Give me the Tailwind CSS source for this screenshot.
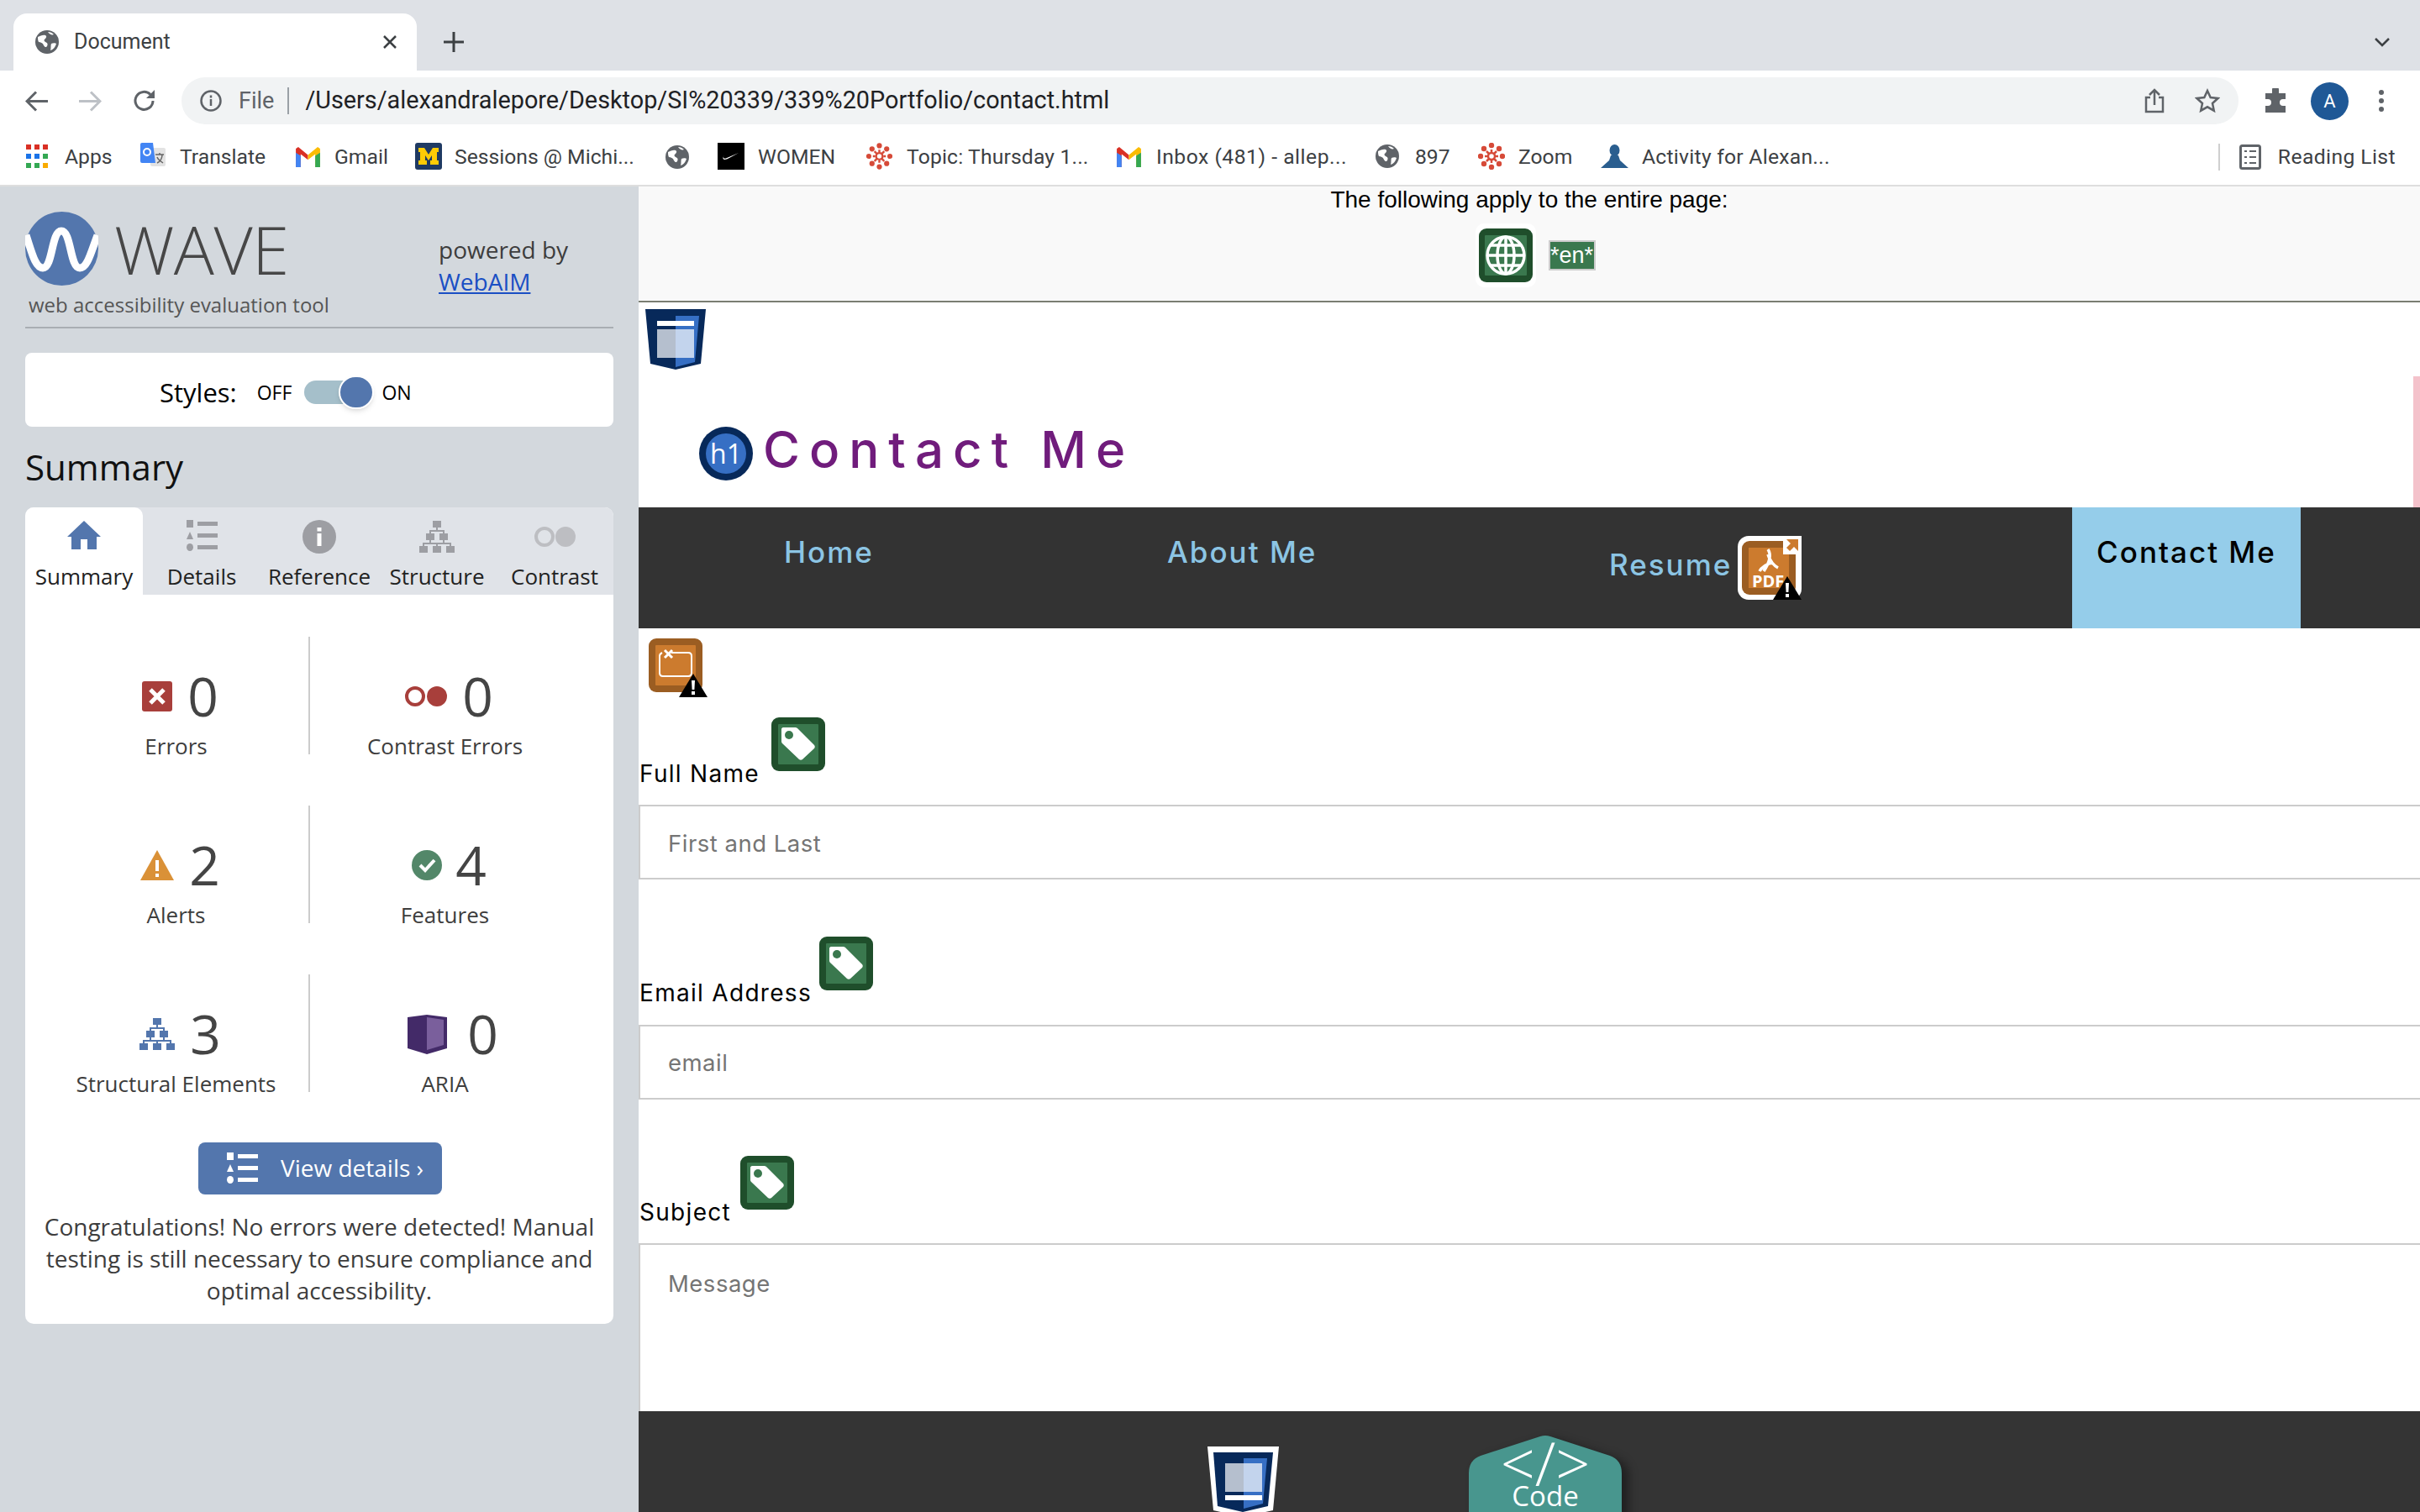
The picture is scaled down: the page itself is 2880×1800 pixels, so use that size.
<!DOCTYPE html>
<html>

<head>
    <meta charset="UTF-8">
    <meta name="viewport" content="width=device-width, initial-scale=1.0">
    <title>Document</title>
    <script src="https://cdn.jsdelivr.net/npm/@tailwindcss/browser@4"></script>
</head>

<body class="w-[2880px] h-[1800px] overflow-hidden bg-white font-['Roboto',sans-serif]">
    <!-- shared icons -->
    <svg class="hidden">
        <symbol id="chromeGlobe" viewBox="0 0 28 28">
            <circle cx="14" cy="14" r="14" fill="#5f6368" />
            <path d="M3 8c3-1 6-3 9-2 2 1 1 3 0 4-2 1-2 3 0 4 3 1 3 3 2 5-1 2-3 1-4-1-1-3-4-4-6-4-1-2-1-4-1-6z" fill="#fff" />
            <path d="M19 16c2-1 5-1 6 0-1 4-4 7-7 8 1-3 0-6 1-8z" fill="#fff" />
            <path d="M15 2c3 0 5 1 7 3-2 1-5 0-7-3z" fill="#fff" />
        </symbol>
        <symbol id="gmail" viewBox="0 0 30 26">
            <path d="M0 26V3l3-2 12 10v6L6 10v16z" fill="#d93025" />
            <path d="M30 26V3l-3-2-12 10v6l9-7v16z" fill="#fbbc04" />
            <path d="M0 26V8l6 4v14z" fill="#4285f4" />
            <path d="M30 26V8l-6 4v14z" fill="#34a853" />
        </symbol>
        <symbol id="canvasLogo" viewBox="0 0 32 32" fill="#d64a38">
            <circle cx="16" cy="16" r="4" fill="none" stroke="#d64a38" stroke-width="2.500" />
            <circle cx="16" cy="3" r="3.200" />
            <circle cx="16" cy="29" r="3.200" />
            <circle cx="3" cy="16" r="3.200" />
            <circle cx="29" cy="16" r="3.200" />
            <circle cx="7" cy="7" r="3.200" />
            <circle cx="25" cy="7" r="3.200" />
            <circle cx="7" cy="25" r="3.200" />
            <circle cx="25" cy="25" r="3.200" />
            <path d="M16 8v3M16 21v3M8 16h3M21 16h3M10 10l3 3M22 10l-3 3M10 22l3-3M22 22l-3-3" stroke="#d64a38" stroke-width="2.500" />
        </symbol>
        <symbol id="tagIcon" viewBox="0 0 64 64">
            <rect width="64" height="64" rx="9" fill="#1f4e2b" />
            <rect x="8" y="8" width="48" height="48" rx="1" fill="#3a784e" />
            <path d="M14 12h14c1 0 2 0 3 1l20 20c1 1 1 3 0 4L37 50c-1 1-3 1-4 0L13 31c-1-1-1-2-1-3V14c0-1 1-2 2-2z" fill="#fff" />
            <circle cx="21" cy="21" r="5" fill="#3a784e" />
        </symbol>
        <symbol id="warnBadge" viewBox="0 0 34 28">
            <path d="M17 0l17 28H0z" fill="#000" />
            <path d="M15 8h4l-.6 11h-2.800zM15 21h4v4h-4z" fill="#fff" />
        </symbol>
        <symbol id="detailsList" viewBox="0 0 37 37">
            <rect width="8" height="9" />
            <path d="M4 14l4 9H0z" />
            <ellipse cx="4" cy="32.500" rx="4" ry="4.500" />
            <rect x="13" y="2" width="24" height="5" />
            <rect x="13" y="16" width="24" height="5" />
            <rect x="13" y="30" width="24" height="5" />
        </symbol>
        <symbol id="structureTree" viewBox="0 0 42 38">
            <rect x="16" y="0" width="10" height="8" />
            <rect x="8" y="15" width="10" height="8" />
            <rect x="24" y="15" width="10" height="8" />
            <rect x="0" y="30" width="10" height="8" />
            <rect x="16" y="30" width="10" height="8" />
            <rect x="32" y="30" width="10" height="8" />
            <path d="M21 8v4M13 15v-3h16v3M13 23v4M29 23v4M5 30v-3h32v3M21 27v3" fill="none" stroke="currentColor" stroke-width="2" />
        </symbol>
    </svg>

    <div class="flex flex-col h-full">
        <!-- tab strip -->
        <div class="h-[84px] shrink-0 bg-[#dee1e6] flex items-end pl-[16px] pr-[35px]">
            <div class="w-[480px] h-[68px] bg-white rounded-t-[16px] flex items-center pl-[26px] pr-[23px]">
                <svg class="w-[28px] h-[28px]"><use href="#chromeGlobe" /></svg>
                <span class="ml-[18px] text-[25px] text-[#3c4043]">Document</span>
                <svg class="ml-auto w-[18px] h-[18px]" viewBox="0 0 18 18" stroke="#3c4043" stroke-width="2.500"><path d="M2 2l14 14M16 2L2 16" /></svg>
            </div>
            <svg class="ml-[32px] mb-[22px] w-[24px] h-[24px]" viewBox="0 0 24 24" stroke="#3c4043" stroke-width="3"><path d="M12 0v24M0 12h24" /></svg>
            <svg class="ml-auto mb-[28px] w-[20px] h-[12px]" viewBox="0 0 20 12" fill="none" stroke="#3c4043" stroke-width="2.500"><path d="M2 2l8 8 8-8" /></svg>
        </div>

        <!-- toolbar -->
        <div class="h-[64px] shrink-0 bg-white flex items-center pt-[8px] pl-[30px] pr-[32px]">
            <svg class="w-[27px] h-[25px]" viewBox="0 0 27 25" fill="none" stroke="#5f6368" stroke-width="3"><path d="M27 12.500H3M13 1.500l-11 11 11 11" /></svg>
            <svg class="ml-[37px] w-[27px] h-[25px]" viewBox="0 0 27 25" fill="none" stroke="#bdc1c6" stroke-width="3"><path d="M0 12.500h24M14 1.500l11 11-11 11" /></svg>
            <svg class="ml-[37px] w-[28px] h-[28px]" viewBox="0 0 28 28" fill="none" stroke="#5f6368" stroke-width="3"><path d="M24 14a10.500 10.500 0 1 1-3-7.500" /><path d="M26 1v10H16z" fill="#5f6368" stroke="none" /></svg>
            <div class="ml-[30px] w-[2448px] h-[56px] bg-[#f1f3f4] rounded-full flex items-center pl-[22px] pr-[20px]">
                <svg class="w-[26px] h-[26px]" viewBox="0 0 26 26" fill="none" stroke="#5f6368" stroke-width="2.500"><circle cx="13" cy="13" r="11.500" /><path d="M13 11v8M13 6.500v3" /></svg>
                <span class="ml-[20px] text-[27px] text-[#5f6368]">File</span>
                <span class="ml-[16px] w-[2px] h-[32px] bg-[#9aa0a6]"></span>
                <span class="ml-[19px] text-[28.800px] text-[#202124] whitespace-nowrap">/Users/alexandralepore/Desktop/SI%20339/339%20Portfolio/contact.html</span>
                <svg class="ml-auto w-[24px] h-[30px]" viewBox="0 0 24 30" fill="none" stroke="#5f6368" stroke-width="2.500"><path d="M7 11H2v17h20V11h-5M12 20V2M6 8l6-6 6 6" /></svg>
                <svg class="ml-[36px] mr-[2px] w-[30px] h-[30px]" viewBox="0 0 30 30" fill="none" stroke="#5f6368" stroke-width="2.500"><path d="M15 3l3.700 8 8.800 1-6.500 6 1.800 8.700L15 22.300l-7.800 4.400L9 18l-6.500-6 8.800-1z" /></svg>
            </div>
            <svg class="ml-[30px] w-[28px] h-[30px]" viewBox="0 0 28 30" fill="#5f6368"><path d="M10 2a4 4 0 0 1 8 0v4h8v7h-3a4 4 0 0 0 0 8h3v8H2v-8h3a4 4 0 0 0 0-8H2V6h8z" /></svg>
            <div class="ml-[28px] w-[45px] h-[45px] rounded-full bg-[#1f5896] text-white text-[22px] flex items-center justify-center">A</div>
            <svg class="ml-[35px] w-[8px] h-[28px]" viewBox="0 0 8 28" fill="#5f6368"><circle cx="4" cy="4" r="3" /><circle cx="4" cy="14" r="3" /><circle cx="4" cy="24" r="3" /></svg>
        </div>

        <!-- bookmarks bar -->
        <div class="h-[74px] shrink-0 bg-white border-b-2 border-[#dedede] flex items-center pt-[5px] pl-[31px] pr-[29px] text-[24.700px] text-[#3c4043] whitespace-nowrap">
            <div class="w-[136px] flex items-center gap-[20px]">
                <svg class="w-[26px] h-[28px]" viewBox="0 0 26 28"><path fill="#d93025" d="M0 0h6v6H0zM10 0h6v6h-6zM20 0h6v6h-6z" /><path fill="#1a73e8" d="M0 11h6v6H0zM10 11h6v6h-6z" /><path fill="#34a853" d="M20 11h6v6h-6zM0 22h6v6H0zM10 22h6v6h-6z" /><path fill="#f9ab00" d="M20 22h6v6h-6z" /></svg>
                <span>Apps</span>
            </div>
            <div class="w-[185px] flex items-center gap-[17px]">
                <svg class="w-[30px] h-[32px]" viewBox="0 0 30 32"><rect x="12" y="6" width="18" height="22" rx="2" fill="#e3e3e3" /><path d="M2 0h13l3 24H9l3 8-3-8H2a2 2 0 0 1-2-2V2a2 2 0 0 1 2-2z" fill="#4285f4" /><circle cx="8" cy="11" r="4" fill="none" stroke="#fff" stroke-width="2" /><path d="M18 14h10M23 12v2M20 24c4-2 6-5 6-10M20 17c1 3 4 5 7 7" fill="none" stroke="#666" stroke-width="1.500" /></svg>
                <span>Translate</span>
            </div>
            <div class="w-[142px] flex items-center gap-[17px]">
                <svg class="w-[29px] h-[25px]"><use href="#gmail" /></svg>
                <span>Gmail</span>
            </div>
            <div class="w-[298px] flex items-center gap-[15px]">
                <svg class="w-[32px] h-[32px]" viewBox="0 0 32 32"><rect width="32" height="32" rx="3" fill="#1f3a63" /><path d="M4 6h7l5 8 5-8h7v5h-2v10h2v5H18v-5h2v-6l-4 6-4-6v6h2v5H4v-5h2V11H4z" fill="#ffcb05" /></svg>
                <span>Sessions @ Michi...</span>
            </div>
            <div class="w-[62px] flex items-center">
                <svg class="w-[28px] h-[28px]"><use href="#chromeGlobe" /></svg>
            </div>
            <div class="w-[177px] flex items-center gap-[16px]">
                <svg class="w-[32px] h-[32px]" viewBox="0 0 32 32"><rect width="32" height="32" fill="#000" /><path d="M25 12L11 18c-2 1-4 1-4-1 0-1 1-2 2-3-2 2-4 5-1 6 2 0 4-1 6-2z" fill="#fff" /></svg>
                <span>WOMEN</span>
            </div>
            <div class="w-[298px] flex items-center gap-[17px]">
                <svg class="w-[31px] h-[32px]"><use href="#canvasLogo" /></svg>
                <span class="tracking-[0.150px]">Topic: Thursday 1...</span>
            </div>
            <div class="w-[308px] flex items-center gap-[18px]">
                <svg class="w-[29px] h-[25px]"><use href="#gmail" /></svg>
                <span class="tracking-[0.500px]">Inbox (481) - allep...</span>
            </div>
            <div class="w-[122px] flex items-center gap-[19px]">
                <svg class="w-[28px] h-[28px]"><use href="#chromeGlobe" /></svg>
                <span>897</span>
            </div>
            <div class="w-[146px] flex items-center gap-[16px]">
                <svg class="w-[32px] h-[32px]"><use href="#canvasLogo" /></svg>
                <span>Zoom</span>
            </div>
            <div class="flex items-center gap-[16px]">
                <svg class="w-[33px] h-[28px]" viewBox="0 0 33 28" fill="#2a5e8f"><ellipse cx="16.500" cy="7" rx="6" ry="7" /><path d="M12 13h9l2 6 10 9H0l10-9z" /></svg>
                <span class="tracking-[0.250px]">Activity for Alexan...</span>
            </div>
            <span class="ml-auto w-[2px] h-[32px] bg-[#cfcfcf]"></span>
            <svg class="ml-[23px] w-[26px] h-[30px]" viewBox="0 0 26 30" fill="none" stroke="#5f6368" stroke-width="3"><rect x="1.500" y="1.500" width="23" height="27" rx="2" /><path d="M6 8h3M12 8h8M6 15h3M12 15h8M6 22h3M12 22h8" stroke-width="2" /></svg>
            <span class="ml-[20px] tracking-[0.400px]">Reading List</span>
        </div>

        <div class="flex flex-1 min-h-0">
            <!-- WAVE sidebar -->
            <aside class="w-[760px] shrink-0 bg-[#d3d8dd] px-[30px] pt-[30px] font-['Open_Sans',sans-serif] text-[#3d3d3d]">
                <div class="h-[139px] border-b-2 border-[#a9aeb3] flex justify-between">
                    <div class="w-[400px]">
                        <div class="flex items-center h-[88px]">
                            <svg class="w-[87px] h-[88px]" viewBox="0 0 87 88">
                                <ellipse cx="43.500" cy="44" rx="43.500" ry="44" fill="#5376ad" />
                                <path d="M1 28c7 21 11 39 20 39 12 0 10-44 22-44s10 44 22 44c9 0 13-18 21-39" fill="none" stroke="#fff" stroke-width="9" />
                            </svg>
                            <span class="ml-[19px] text-[80px] leading-[88px] font-light text-[#474747] tracking-[-0.500px]">WAVE</span>
                        </div>
                        <div class="ml-[4px] mt-[6px] text-[24px] leading-[34px] text-[#555] whitespace-nowrap">web accessibility evaluation tool</div>
                    </div>
                    <div class="w-[208px] pt-[26px] text-[28px] leading-[38px]">
                        <div>powered by</div>
                        <a class="text-[#1a4fc4] underline" href="#">WebAIM</a>
                    </div>
                </div>

                <div class="mt-[29px] h-[88px] bg-white rounded-[8px] flex items-center text-black pl-[160px] pt-[6px]">
                    <span class="text-[31px]">Styles:</span>
                    <span class="ml-[24px] text-[23px]">OFF</span>
                    <span class="ml-[15px] relative w-[83px] h-[28px] flex items-center">
                        <span class="w-[60px] h-[28px] bg-[#a5bfca] rounded-l-full"></span>
                        <span class="absolute left-[41px] top-[-6px] w-[42px] h-[40px] rounded-full bg-[#5376ad] border-2 border-white shadow-md"></span>
                    </span>
                    <span class="ml-[9px] text-[23px]">ON</span>
                </div>

                <h2 class="mt-[18px] text-[42px] leading-[60px] text-[#111]">Summary</h2>

                <div class="mt-[18px] h-[972px] bg-white rounded-[10px] overflow-hidden">
                    <div class="h-[104px] bg-[#e0e3e8] flex text-[26px] text-[#222]">
                        <div class="w-[140px] bg-white rounded-tr-[10px] pt-[16px] flex flex-col items-center">
                            <svg class="w-[40px] h-[34px]" viewBox="0 0 40 34" fill="#5376ad"><path d="M20 0l20 19h-5v15H24V22h-8v12H5V19H0z" /></svg>
                            <span class="mt-[14px] leading-[36px]">Summary</span>
                        </div>
                        <div class="w-[140px] pt-[15px] flex flex-col items-center text-[#222]">
                            <svg class="w-[37px] h-[37px] fill-[#9d9ea3]"><use href="#detailsList" /></svg>
                            <span class="mt-[12px] leading-[36px]">Details</span>
                        </div>
                        <div class="w-[140px] pt-[15px] flex flex-col items-center">
                            <svg class="w-[40px] h-[40px]" viewBox="0 0 40 40"><circle cx="20" cy="20" r="20" fill="#9d9ea3" /><path d="M17.500 16h5v15h-5zM17.500 9h5v4.500h-5z" fill="#fff" /></svg>
                            <span class="mt-[9px] leading-[36px] whitespace-nowrap">Reference</span>
                        </div>
                        <div class="w-[140px] pt-[16px] flex flex-col items-center">
                            <svg class="w-[42px] h-[38px] fill-[#9d9ea3] text-[#9d9ea3]"><use href="#structureTree" /></svg>
                            <span class="mt-[10px] leading-[36px] whitespace-nowrap">Structure</span>
                        </div>
                        <div class="w-[140px] pt-[23px] flex flex-col items-center">
                            <svg class="w-[50px] h-[24px]" viewBox="0 0 50 24"><ellipse cx="13" cy="12" rx="10" ry="10" fill="none" stroke="#bdbec2" stroke-width="4" /><ellipse cx="38" cy="12" rx="12" ry="12" fill="#bdbec2" /></svg>
                            <span class="mt-[17px] leading-[36px]">Contrast</span>
                        </div>
                    </div>

                    <div class="mt-[50px] ml-[22px] grid grid-cols-[317px_321px] gap-y-[61px] text-center">
                        <div class="h-[140px] border-r-2 border-[#ccc] pt-[39px]">
                            <div class="flex items-center justify-center gap-[18px] h-[64px] pl-[10px] text-[64px] text-[#444]">
                                <svg class="w-[36px] h-[36px]" viewBox="0 0 36 36"><rect width="36" height="36" rx="3" fill="#a83f3b" /><path d="M10 10l16 16M26 10L10 26" stroke="#fff" stroke-width="5" /></svg>
                                <span>0</span>
                            </div>
                            <div class="mt-[9px] text-[26px] leading-[36px] whitespace-nowrap">Errors</div>
                        </div>
                        <div class="h-[140px] pt-[39px]">
                            <div class="flex items-center justify-center gap-[18px] h-[64px] pl-[10px] text-[64px] text-[#444]">
                                <svg class="w-[50px] h-[24px]" viewBox="0 0 50 24"><circle cx="12" cy="12" r="10" fill="none" stroke="#a83f3b" stroke-width="4" /><circle cx="38" cy="12" r="12" fill="#a83f3b" /></svg>
                                <span>0</span>
                            </div>
                            <div class="mt-[9px] text-[26px] leading-[36px] whitespace-nowrap">Contrast Errors</div>
                        </div>
                        <div class="h-[140px] border-r-2 border-[#ccc] pt-[39px]">
                            <div class="flex items-center justify-center gap-[18px] h-[64px] pl-[10px] text-[64px] text-[#444]">
                                <svg class="w-[40px] h-[36px]" viewBox="0 0 40 36"><path d="M20 0l20 36H0z" fill="#da9137" /><path d="M18 12h4v13h-4zM18 28h4v4h-4z" fill="#fff" /></svg>
                                <span>2</span>
                            </div>
                            <div class="mt-[9px] text-[26px] leading-[36px] whitespace-nowrap">Alerts</div>
                        </div>
                        <div class="h-[140px] pt-[39px]">
                            <div class="flex items-center justify-center gap-[16px] h-[64px] pl-[10px] text-[64px] text-[#444]">
                                <svg class="w-[36px] h-[36px]" viewBox="0 0 36 36"><circle cx="18" cy="18" r="18" fill="#538769" /><path d="M10 18l6 6 11-12" fill="none" stroke="#fff" stroke-width="4" /></svg>
                                <span>4</span>
                            </div>
                            <div class="mt-[9px] text-[26px] leading-[36px] whitespace-nowrap">Features</div>
                        </div>
                        <div class="h-[140px] border-r-2 border-[#ccc] pt-[39px]">
                            <div class="flex items-center justify-center gap-[18px] h-[64px] pl-[10px] text-[64px] text-[#444]">
                                <svg class="w-[42px] h-[38px] fill-[#5376ad] text-[#5376ad]"><use href="#structureTree" /></svg>
                                <span>3</span>
                            </div>
                            <div class="mt-[9px] text-[26px] leading-[36px] whitespace-nowrap">Structural Elements</div>
                        </div>
                        <div class="h-[140px] pt-[39px]">
                            <div class="flex items-center justify-center gap-[24px] h-[64px] pl-[19px] text-[64px] text-[#444]">
                                <svg class="w-[47px] h-[47px]" viewBox="0 0 47 47"><path d="M0 3l23-3 24 3v37l-24 7-23-7z" fill="#432a68" /><path d="M23 3l20 3v30l-20 6z" fill="#7a5f9c" /></svg>
                                <span>0</span>
                            </div>
                            <div class="mt-[9px] text-[26px] leading-[36px] whitespace-nowrap">ARIA</div>
                        </div>
                    </div>

                    <button class="mt-[60px] ml-[206px] w-[290px] h-[62px] rounded-[8px] bg-[#5376ad] text-white flex items-center pl-[34px] pb-[2px] text-[28px]">
                        <svg class="w-[37px] h-[37px] fill-white"><use href="#detailsList" /></svg>
                        <span class="ml-[27px] whitespace-nowrap">View details ›</span>
                    </button>

                    <p class="mt-[19px] px-[20px] text-center text-[28px] leading-[38px]">Congratulations! No errors were detected! Manual testing is still necessary to ensure compliance and optimal accessibility.</p>
                </div>
            </aside>

            <!-- page with WAVE icons -->
            <main class="relative flex-1 min-w-0 flex flex-col overflow-hidden font-['Inter',sans-serif]">
                <div class="h-[138px] shrink-0 bg-[#f9f9f9] border-b-2 border-[#7a7e72] flex flex-col items-center font-['Liberation_Sans',sans-serif] text-black">
                    <div class="text-[28px] leading-[32px] whitespace-nowrap">The following apply to the entire page:</div>
                    <div class="mt-[12px] ml-[14px] flex items-center">
                        <div class="w-[72px] h-[76px] bg-white rounded-[10px] flex items-center justify-center">
                            <svg class="w-[64px] h-[64px]" viewBox="0 0 64 64">
                                <rect width="64" height="64" rx="9" fill="#1f4e2b" />
                                <rect x="7" y="8" width="50" height="48" rx="1" fill="#3a784e" />
                                <g fill="none" stroke="#fff" stroke-width="3.500"><circle cx="32" cy="32" r="22" /><ellipse cx="32" cy="32" rx="10" ry="22" /><path d="M32 10v44M10 32h44M14 20h36M14 44h36" /></g>
                            </svg>
                        </div>
                        <div class="ml-[15px] w-[56px] h-[36px] border-2 border-[#ccc] bg-[#3a784e] text-white text-[27px] leading-[32px] text-center">*en*</div>
                    </div>
                </div>

                <div class="h-[244px] shrink-0 pl-[8px] pt-[8px]">
                    <svg class="w-[72px] h-[72px]" viewBox="0 0 72 72">
                        <path d="M0 0h72l-6 65-30 7-30-7z" fill="#07295a" />
                        <path d="M36 8h28l-5 55-23 6z" fill="#366fc4" />
                        <rect x="14" y="14" width="44" height="6" fill="#fff" />
                        <rect x="14" y="24" width="44" height="34" fill="#fff" fill-opacity=".7" />
                    </svg>
                    <div class="mt-[68px] ml-[64px] flex items-center h-[64px]">
                        <div class="w-[64px] h-[64px] rounded-full bg-[#07295a] flex items-center justify-center">
                            <div class="w-[48px] h-[48px] rounded-full bg-[#366fc4] text-white text-[32px] font-['Open_Sans',sans-serif] flex items-center justify-center">h1</div>
                        </div>
                        <h1 class="ml-[12px] mb-[10px] text-[60px] leading-[56px] font-medium tracking-[11px] text-[#701c7c] whitespace-nowrap">Contact Me</h1>
                    </div>
                </div>
                <div class="absolute right-0 top-[226px] w-[8px] h-[156px] bg-[#f4c2cb]"></div>

                <nav class="h-[144px] shrink-0 bg-[#333] flex pl-[173px] text-[35px] font-medium tracking-[2px] text-[#8cc5e4] whitespace-nowrap">
                    <a class="w-[456px] pt-[33px] leading-[40px]" href="#">Home</a>
                    <a class="w-[526px] pt-[33px] leading-[40px]" href="#">About Me</a>
                    <div class="w-[551px] pt-[34px] flex">
                        <a class="w-[146px] mt-[14px] leading-[40px]" href="#">Resume</a>
                        <div class="ml-[7px] relative w-[76px] h-[76px]">
                            <svg class="w-[76px] h-[76px]" viewBox="0 0 76 76">
                                <rect width="76" height="76" rx="13" fill="#fff" />
                                <rect x="5" y="6" width="64" height="64" rx="9" fill="#9b5d22" />
                                <rect x="13" y="14" width="48" height="48" fill="#cc7b2e" />
                                <path d="M36 16c4 6 3 14-5 26M36 22c2 8 8 14 12 16M42 32c-6 0-14 6-16 10" fill="none" stroke="#fff" stroke-width="3.500" />
                                <rect x="54" y="0" width="22" height="22" fill="#fff" />
                                <path d="M58 4h14v14l-5-5-5 5-4-4 5-5z" fill="#cc7b2e" />
                            </svg>
                            <span class="absolute left-[17px] top-[44px] text-[20px] leading-[20px] tracking-normal font-bold font-['Open_Sans',sans-serif] text-white">PDF</span>
                            <svg class="absolute left-[42px] top-[48px] w-[34px] h-[28px]"><use href="#warnBadge" /></svg>
                        </div>
                    </div>
                    <a class="w-[272px] bg-[#95cdea] text-black text-center pt-[33px] leading-[40px]" href="#">Contact Me</a>
                </nav>

                <form class="flex flex-col flex-1 min-h-0 text-[28px] text-black tracking-[1.300px]">
                    <div class="ml-[12px] mt-[12px] relative w-[64px] h-[64px] shrink-0">
                        <svg class="w-[64px] h-[64px]" viewBox="0 0 64 64">
                            <rect width="64" height="64" rx="9" fill="#9b5d22" />
                            <rect x="8" y="8" width="48" height="48" rx="1" fill="#cc7b2e" />
                            <path d="M16 17c-2 1-3 2-3 4v20c0 3 1 4 4 4h30c3 0 4-1 4-4V21c0-3-1-4-4-4H27" fill="none" stroke="#fff" stroke-width="2" />
                            <path d="M19 14l9 9M28 14l-9 9" stroke="#fff" stroke-width="3" />
                        </svg>
                        <svg class="absolute left-[36px] top-[42px] w-[34px] h-[28px]"><use href="#warnBadge" /></svg>
                    </div>

                    <div class="mt-[30px] h-[84px] shrink-0 flex pl-[1px]">
                        <label class="w-[144px] self-end leading-[34px] whitespace-nowrap">Full Name</label>
                        <svg class="ml-[13px] w-[64px] h-[64px]"><use href="#tagIcon" /></svg>
                    </div>
                    <input class="mt-[20px] h-[89px] shrink-0 w-full border-y-2 border-l-2 border-[#ccc] pt-[2px] pl-[33px] text-[27.500px] tracking-[0.500px] placeholder:text-[#757575]" placeholder="First and Last">

                    <div class="mt-[68px] h-[84px] shrink-0 flex pl-[1px]">
                        <label class="w-[203px] self-end leading-[34px] whitespace-nowrap">Email Address</label>
                        <svg class="ml-[11px] w-[64px] h-[64px]"><use href="#tagIcon" /></svg>
                    </div>
                    <input class="mt-[21px] h-[89px] shrink-0 w-full border-y-2 border-l-2 border-[#ccc] pl-[33px] text-[27.500px] tracking-[0.500px] placeholder:text-[#757575]" placeholder="email">

                    <div class="mt-[67px] h-[84px] shrink-0 flex pl-[1px]">
                        <label class="w-[107px] self-end leading-[34px] whitespace-nowrap">Subject</label>
                        <svg class="ml-[13px] w-[64px] h-[64px]"><use href="#tagIcon" /></svg>
                    </div>
                    <textarea class="mt-[20px] flex-1 min-h-0 w-full resize-none border-t-2 border-l-2 border-[#ccc] pl-[33px] pt-[26px] text-[27.500px] tracking-[0.500px] placeholder:text-[#757575]" placeholder="Message"></textarea>
                </form>

                <footer class="h-[120px] shrink-0 bg-[#343434] flex items-start overflow-hidden pl-[677px]">
                    <svg class="mt-[42px] w-[85px] h-[78px] shrink-0" viewBox="0 0 85 78">
                        <path d="M0 0h85l-7 76-36 8-35-8z" fill="#fff" />
                        <path d="M7 7h71l-6 64-30 7-30-7z" fill="#07295a" />
                        <path d="M43 14h28l-5 54-23 6z" fill="#366fc4" />
                        <rect x="21" y="20" width="44" height="34" fill="#fff" fill-opacity=".7" />
                        <rect x="21" y="58" width="44" height="6" fill="#fff" />
                    </svg>
                    <div class="relative ml-[226px] mt-[29px] w-[182px] h-[91px] shrink-0 font-['Open_Sans',sans-serif] text-white text-center">
                        <svg class="absolute top-0 left-0 w-[182px] h-[110px] overflow-visible drop-shadow-[8px_4px_6px_rgba(0,0,0,0.4)]" viewBox="0 0 182 110"><path d="M91 0q3 0 6 1l71 23q14 5 14 21v65H0V45q0-16 14-21L85 1q3-1 6-1z" fill="#48968e" /></svg>
                        <div class="relative h-[54px] text-[72px] leading-[64px] whitespace-nowrap font-light">&lt;/&gt;</div>
                        <div class="relative text-[33px] leading-[36px]">Code</div>
                    </div>
                </footer>
            </main>
        </div>
    </div>
</body>

</html>
